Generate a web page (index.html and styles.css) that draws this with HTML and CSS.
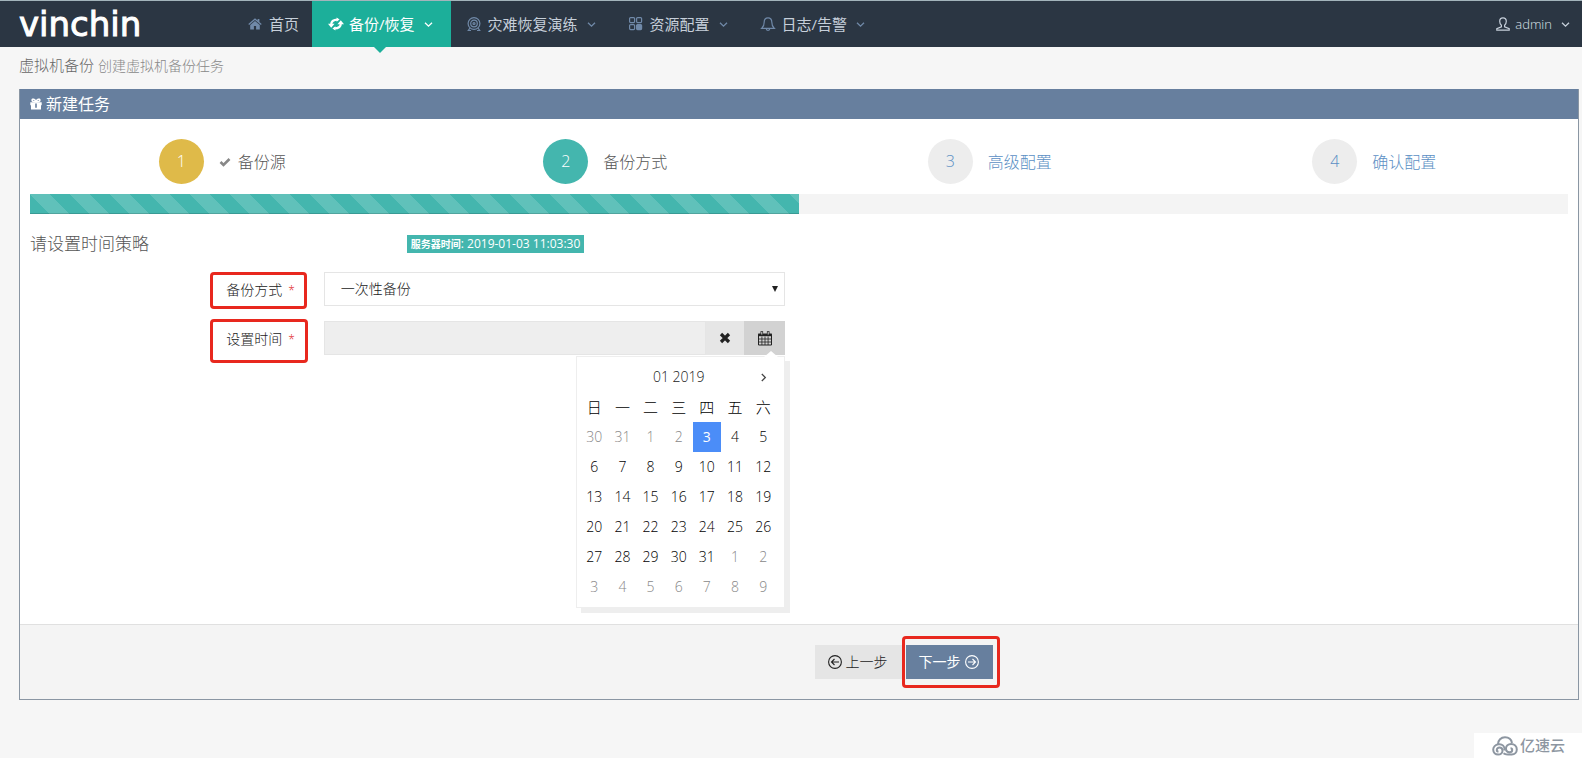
FILE: index.html
```html
<!DOCTYPE html>
<html lang="zh-CN">
<head>
<meta charset="utf-8">
<meta name="viewport" content="width=device-width, initial-scale=1">
<title>创建虚拟机备份任务</title>
<link rel="stylesheet" href="styles.css">
</head>
<body>
<header class="topbar">
  <a class="logo" href="#">vinchin</a>
  <nav class="nav">
    <a class="nav-item nav-home" href="#">
      <svg class="icon" viewBox="0 0 14 14"><path fill="currentColor" d="M7 1.200 0.300 7l.8.900L7 2.900l5.900 5 .8-.9-2.300-2V2H9.600v1.400zM7 4 2.200 8v4.600h3.700V9h2.200v3.600h3.700V8z"/></svg>
      <span>首页</span>
    </a>
    <a class="nav-item active" href="#">
      <svg class="icon" viewBox="0 0 16 14"><g fill="none" stroke="currentColor" stroke-width="2.200"><path d="M3.200 7.500C3.200 4.500 5.500 2.600 9.600 2.600"/><path d="M12.800 6.500c0 3-2.300 4.900-6.400 4.900"/></g><path fill="currentColor" d="M0 6.700h6.600L3.200 10.700zM16 7.300H9.400l3.400-4zM8.600.6l3 1.800-3 2.400zM7.400 13.400l-3-1.800 3-2.400z"/></svg>
      <span>备份/恢复</span>
      <svg class="chev" viewBox="0 0 9 9"><path d="M1 2.700 4.500 6.200 8 2.700"/></svg>
    </a>
    <a class="nav-item" href="#">
      <svg class="icon line" viewBox="0 0 14 14"><circle cx="7" cy="6.500" r="5.900"/><circle cx="7" cy="6.500" r="3.300"/><circle cx="7" cy="6.500" r="1"/><path d="M3 11 1.300 13.500H4M11 11l1.700 2.500H10"/></svg>
      <span>灾难恢复演练</span>
      <svg class="chev" viewBox="0 0 9 9"><path d="M1 2.700 4.500 6.200 8 2.700"/></svg>
    </a>
    <a class="nav-item" href="#">
      <svg class="icon line" viewBox="0 0 14 14"><rect x=".6" y=".6" width="5" height="5" rx="1"/><rect x="7.600" y=".6" width="5" height="5" rx="1"/><rect x=".6" y="7.600" width="5" height="5" rx="1"/><rect x="7.600" y="7.600" width="5" height="5" rx="1" fill="currentColor"/></svg>
      <span>资源配置</span>
      <svg class="chev" viewBox="0 0 9 9"><path d="M1 2.700 4.500 6.200 8 2.700"/></svg>
    </a>
    <a class="nav-item" href="#">
      <svg class="icon line" viewBox="0 0 14 14"><path d="M7 .8C4.500.8 3.200 2.600 3.200 5c0 3.500-.9 5-2.400 6.300h12.400C11.700 10 10.800 8.500 10.800 5 10.800 2.600 9.500.8 7 .8zM5.200 11.600c0 2.400 3.600 2.400 3.600 0"/></svg>
      <span>日志/告警</span>
      <svg class="chev" viewBox="0 0 9 9"><path d="M1 2.700 4.500 6.200 8 2.700"/></svg>
    </a>
  </nav>
  <a class="user" href="#">
    <svg class="icon line" viewBox="0 0 14 14"><path d="M7 .8c-2 0-3.300 1.400-3.300 3.500 0 1.700.7 3.100 1.700 3.900v1.600L.8 11.600v1.500h12.400v-1.500L8.600 9.800V8.200c1-.8 1.700-2.200 1.700-3.900C10.300 2.200 9 .8 7 .8z"/></svg>
    <span>admin</span>
    <svg class="chev" viewBox="0 0 9 9"><path d="M1 2.700 4.500 6.200 8 2.700"/></svg>
  </a>
</header>

<main class="page">
  <h1 class="page-title">虚拟机备份 <small>创建虚拟机备份任务</small></h1>

  <section class="card">
    <h2 class="card-head">
      <svg class="gift" viewBox="0 0 12 12"><path fill="currentColor" d="M.3 4.200h11.400v3H11V11.500H1V7.200H.3z"/><path fill="none" stroke="currentColor" stroke-width="1.500" d="M6 3.800C5 1 2.300.3 2.100 2.200 2 3.600 4 3.800 6 3.800c2 0 4-.2 3.900-1.600C9.700.3 7 1 6 3.800z"/><path class="ribbon" d="M5.200 5.500h1.600v4.300H5.200z"/></svg>
      新建任务
    </h2>

    <div class="card-body">
      <ol class="steps">
        <li class="step done">
          <a href="#"><span class="num">1</span><svg class="check" viewBox="0 0 12 10"><path d="m1.500 5 3 3L10.500 2"/></svg><span>备份源</span></a>
        </li>
        <li class="step current"><a href="#"><span class="num">2</span><span>备份方式</span></a></li>
        <li class="step"><a href="#"><span class="num">3</span><span>高级配置</span></a></li>
        <li class="step"><a href="#"><span class="num">4</span><span>确认配置</span></a></li>
      </ol>

      <div class="progress"><div class="progress-bar" style="width:50%"></div></div>

      <div class="section-head">
        <h3>请设置时间策略</h3>
        <span class="badge"><b>服务器时间</b>: 2019-01-03 11:03:30</span>
      </div>

      <form class="form" id="strategy">
        <div class="form-row">
          <label class="label" for="mode">备份方式<span class="req">*</span></label>
          <div class="select-wrap">
            <select id="mode" class="control"><option>一次性备份</option></select>
          </div>
        </div>
        <div class="form-row">
          <label class="label tall" for="time">设置时间<span class="req">*</span></label>
          <div class="input-group">
            <input id="time" class="control" type="text" readonly>
            <button class="addon clear" type="button" aria-label="清除">
              <svg viewBox="0 0 12 12"><path d="m2 2 8 8M10 2l-8 8" stroke="currentColor" stroke-width="3.200"/></svg>
            </button>
            <button class="addon open" type="button" aria-label="选择日期">
              <svg viewBox="0 0 14 15"><path fill="none" stroke="currentColor" d="M.5 3.500h13v10.500H.5z"/><path fill="none" stroke="currentColor" stroke-width=".8" d="M.7 8h12.600M.7 11h12.600M3.900 5.500v8.500M7 5.500v8.500M10.100 5.500v8.500"/><path fill="currentColor" d="M.2 2.500h13.600V5.200H.2z"/><path fill="none" stroke="currentColor" stroke-width="2.600" d="M3.800.3v3.500M10.200.3v3.500"/><path stroke="#ddd" d="M3.800 1v2.500M10.200 1v2.500"/></svg>
            </button>
            <div class="picker">
              <div class="picker-head">
                <span>01 2019</span>
                <button class="picker-next" type="button" aria-label="下个月"><svg viewBox="0 0 9 9"><path d="M2.800 1 6.300 4.500 2.800 8"/></svg></button>
              </div>
              <table class="days">
                <thead><tr><th>日</th><th>一</th><th>二</th><th>三</th><th>四</th><th>五</th><th>六</th></tr></thead>
                <tbody>
                  <tr><td class="out">30</td><td class="out">31</td><td class="out">1</td><td class="out">2</td><td class="today">3</td><td>4</td><td>5</td></tr>
                  <tr><td>6</td><td>7</td><td>8</td><td>9</td><td>10</td><td>11</td><td>12</td></tr>
                  <tr><td>13</td><td>14</td><td>15</td><td>16</td><td>17</td><td>18</td><td>19</td></tr>
                  <tr><td>20</td><td>21</td><td>22</td><td>23</td><td>24</td><td>25</td><td>26</td></tr>
                  <tr><td>27</td><td>28</td><td>29</td><td>30</td><td>31</td><td class="out">1</td><td class="out">2</td></tr>
                  <tr><td class="out">3</td><td class="out">4</td><td class="out">5</td><td class="out">6</td><td class="out">7</td><td class="out">8</td><td class="out">9</td></tr>
                </tbody>
              </table>
            </div>
          </div>
        </div>
      </form>
    </div>

    <footer class="actions">
      <button class="btn" type="button">
        <svg viewBox="0 0 14 14"><circle cx="7" cy="7" r="6.400"/><path d="M11 7H3.500M6.500 4l-3 3 3 3"/></svg>
        <span>上一步</span>
      </button>
      <button class="btn primary" type="button">
        <span>下一步</span>
        <svg viewBox="0 0 14 14"><circle cx="7" cy="7" r="6.400"/><path d="M3 7h7.500M7.500 4l3 3-3 3"/></svg>
      </button>
    </footer>
  </section>
</main>

<div class="watermark">
  <svg viewBox="0 0 26 20"><path d="M6 8.200C6 4 9 1.300 13 1.300c3.700 0 6.400 2.300 7 5.700"/><path d="M12.500 14.500c.8-4-2.300-6.800-6-6.300C3.300 8.600 1.200 11 1.200 13.600c0 2.900 2.200 5 5 5 2.400 0 4.300-1.600 4.300-3.800 0-1.900-1.400-3.200-3.100-3.200-1.500 0-2.600 1-2.600 2.300 0 1 .8 1.700 1.700 1.700"/><path d="M11.500 17.200c2 1.500 5 1.500 8.300 1.400 2.900-.1 5-2.200 5-5 0-3.300-2.500-5.600-5.700-5.600-3 0-5.100 2-5.100 4.500 0 2.200 1.600 3.700 3.500 3.700 1.600 0 2.700-1 2.700-2.300 0-1-.8-1.700-1.700-1.700"/></svg>
  <span>亿速云</span>
</div>
</body>
</html>
```
FILE: styles.css
```css
* { box-sizing: border-box; }

body {
  margin: 0;
  min-height: 100vh;
  background: #f6f6f6;
  color: #222;
  font: 300 14px/20px "Open Sans", "Noto Sans CJK SC", sans-serif;
}

a { color: inherit; text-decoration: none; }
svg { display: block; flex: none; overflow: visible; }
button, input, select { font: inherit; color: inherit; }

/* Top bar */
.topbar {
  display: flex;
  height: 47px;
  padding-left: 19px;
  border-top: 1px solid #a3b4bb;
  background: #2b3643;
  color: #c6cfda;
}
.logo {
  width: 213px;
  color: #fff;
  font: 400 34px/46px "DejaVu Sans", sans-serif;
  -webkit-text-stroke: 1px #fff;
}
.nav { display: flex; flex: 1; }
.nav-item {
  position: relative;
  display: flex;
  align-items: center;
  padding: 0 17px 0 16px;
  font-size: 15px;
  font-weight: 400;
  white-space: nowrap;
}
.nav-home { padding-right: 13px; }
.icon { width: 14px; height: 14px; margin-right: 7px; color: #7089a8; }
.line { fill: none; stroke: currentColor; stroke-width: 1.2; }
.chev {
  width: 9px;
  height: 9px;
  margin-left: 9px;
  fill: none;
  stroke: #7089a8;
  stroke-width: 1.3;
}
.active { padding-right: 18px; background: #1caf9a; color: #fff; }
.active .icon { width: 16px; margin-right: 5px; color: #fff; }
.active .chev { stroke: #fff; }
.active::after {
  content: "";
  position: absolute;
  top: 100%;
  left: 50%;
  margin-left: -7px;
  border: 6px solid transparent;
  border-top-color: #1caf9a;
  border-bottom: 0;
}
.user {
  display: flex;
  align-items: center;
  padding: 0 12px;
  color: #dbe2ea;
  font-size: 13px;
}
.user .icon { margin-right: 5px; color: #c6cfda; }
.user .chev { stroke: #c6cfda; }

/* Page */
.page { padding: 0 3px 0 19px; }
.page-title {
  margin: 0;
  padding: 8px 0 13px;
  color: #666;
  font-size: 15px;
  font-weight: 300;
  line-height: 20px;
}
.page-title small { color: #888; font-size: 14px; }

.card { border: 1px solid #8a96a3; border-top: 0; background: #fff; }
.card-head {
  display: flex;
  align-items: center;
  gap: 4px;
  margin: 0;
  padding: 0 10px;
  background: #677f9e;
  color: #fff;
  font-size: 16px;
  font-weight: 400;
  line-height: 30px;
}
.gift { width: 12px; height: 12px; }
.ribbon { fill: #677f9e; }
.card-body { padding: 20px 10px 0; min-height: 505px; }

/* Wizard steps */
.steps {
  display: grid;
  grid-template-columns: repeat(4, 1fr);
  margin: 0;
  padding: 0;
  list-style: none;
  font-size: 16px;
}
.step { padding-left: 33.5%; color: #5b8fc4; }
.step a { display: flex; align-items: center; white-space: nowrap; }
.num {
  width: 45px;
  margin-right: 15px;
  border-radius: 50%;
  background: #ededed;
  line-height: 45px;
  text-align: center;
}
.done, .current { color: #555; }
.done .num { background: #dfba49; color: #fff; }
.current .num { background: #44b6ae; color: #fff; }
.check {
  width: 12px;
  height: 10px;
  margin-right: 7px;
  fill: none;
  stroke: #888;
  stroke-width: 2.6;
}

.progress { height: 20px; margin-top: 10px; background: #f4f4f4; }
.progress-bar {
  height: 100%;
  background: #44b6ae linear-gradient(45deg, rgba(255,255,255,.15) 25%, transparent 25%, transparent 50%, rgba(255,255,255,.15) 50%, rgba(255,255,255,.15) 75%, transparent 75%, transparent) 0 0 / 40px 40px;
  box-shadow: inset 0 -1px 0 rgba(0,0,0,.15);
}

.section-head {
  display: grid;
  grid-template-columns: 24.5% auto;
  align-items: center;
  justify-content: start;
  margin-top: 20px;
}
.section-head h3 { margin: 0; color: #555; font-size: 17px; font-weight: 300; line-height: 20px; }
.badge {
  padding: 0 4px;
  background: #44b6ae;
  color: #fff;
  font-size: 12px;
  font-weight: 400;
  line-height: 18px;
}
.badge b { font-size: 10px; font-weight: 700; }

/* Form */
.form { display: grid; gap: 15px; margin-top: 18px; }
.form-row {
  display: grid;
  grid-template-columns: 18% 30%;
  grid-template-rows: 34px;
  column-gap: 17px;
}
.label {
  position: relative;
  justify-self: end;
  padding: 0 12px 0 16px;
  line-height: 36px;
}
.label::after {
  content: "";
  position: absolute;
  inset: 0 0 -3px;
  border: 3px solid #e8281e;
  border-radius: 4px;
}
.tall::after { inset: -2px -1px -8px 0; }
.req { margin-left: 6px; color: #e02222; font-size: 12px; }
.control {
  width: 100%;
  height: 34px;
  padding: 0 16px;
  border: 1px solid #e5e5e5;
  border-radius: 0;
  background: #fff;
  appearance: none;
}
.select-wrap { position: relative; }
.select-wrap::after {
  content: "";
  position: absolute;
  top: 14px;
  right: 7px;
  border: 3px solid transparent;
  border-top: 6px solid #222;
  border-bottom: 0;
  pointer-events: none;
}
.input-group { position: relative; display: flex; }
.input-group .control { flex: 1; min-width: 0; background: #eee; }
.addon {
  display: flex;
  align-items: center;
  justify-content: center;
  width: 38px;
  padding: 0;
  border: 0;
  background: #e6e6e6;
}
.addon svg { width: 12px; height: 12px; }
.open { width: 41px; background: #d2d2d2; }
.open svg { width: 14px; height: 15px; }

/* Date picker */
.picker {
  position: absolute;
  top: 35px;
  right: 0;
  width: 209px;
  padding: 5px 7px 5px 3px;
  border: 1px solid #eee;
  background: #fff;
  box-shadow: 5px 5px #eee;
}
.picker::before {
  content: "";
  position: absolute;
  top: -6px;
  right: 6px;
  border: 7px solid transparent;
  border-bottom: 6px solid #fff;
  border-top: 0;
}
.picker-head {
  display: grid;
  grid-template-columns: 1fr 5fr 1fr;
  height: 30px;
  align-items: center;
  text-align: center;
}
.picker-head span { grid-column: 2; }
.picker-next { display: grid; place-items: center; padding: 0; border: 0; background: none; }
.picker-next svg { width: 9px; height: 9px; fill: none; stroke: #444; stroke-width: 1.3; }
.days { width: 100%; table-layout: fixed; border-collapse: collapse; color: #000; }
.days th, .days td { height: 30px; padding: 0; text-align: center; font-weight: 300; }
.days th { font-size: 15px; }
.days .out { color: #888; }
.days .today { background: #4b8df8; color: #fff; font-weight: 400; }

/* Footer buttons */
.actions {
  display: flex;
  gap: 4px;
  padding: 20px 0 20px 51%;
  border-top: 1px solid #e0e0e0;
  background: #f4f4f4;
}
.btn {
  display: flex;
  align-items: center;
  gap: 4px;
  height: 34px;
  padding: 0 14px 0 13px;
  border: 0;
  background: #e5e5e5;
}
.btn svg { width: 14px; height: 14px; fill: none; stroke: currentColor; stroke-width: 1.1; }
.primary { position: relative; background: #677f9e; color: #fff; font-weight: 400; }
.primary::after {
  content: "";
  position: absolute;
  inset: -9px -7px -9px -4px;
  border: 3px solid #e8281e;
  border-radius: 4px;
}

.watermark {
  position: fixed;
  right: 0;
  bottom: 0;
  display: flex;
  align-items: center;
  gap: 2px;
  padding: 0 17px 0 18px;
  background: #fff;
  color: #8d96a1;
  font-size: 15px;
  font-weight: 500;
  line-height: 25px;
}
.watermark svg { width: 26px; height: 20px; fill: none; stroke: currentColor; stroke-width: 2; }
```
